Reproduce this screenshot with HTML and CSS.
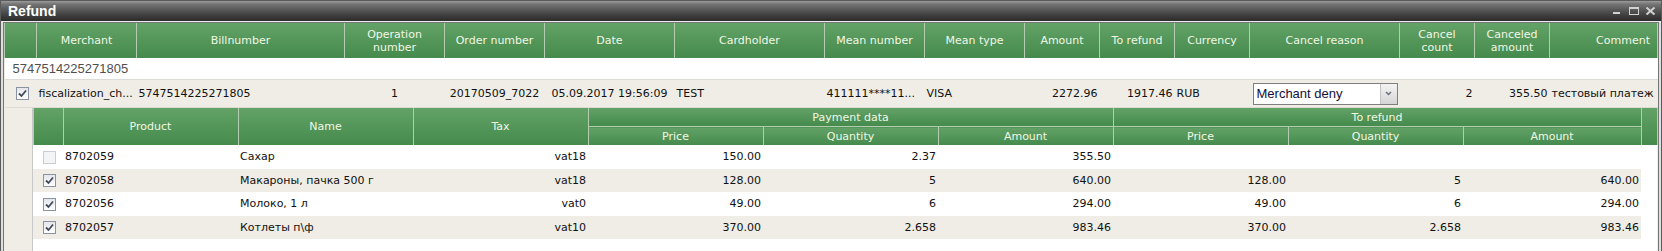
FILE: index.html
```html
<!DOCTYPE html>
<html lang="ru">
<head>
  <meta charset="UTF-8" />
  <title>Refund</title>
  <link rel="stylesheet" href="styles.css">
</head>
<body>
  <div class="window">
    <div class="titlebar">
      <span class="title">Refund</span>
      <svg class="controls" width="43" height="8" viewBox="0 0 43 8">
        <rect x="0" y="5" width="7" height="2" />
        <rect x="16" y="0" width="10" height="2" />
        <rect x="16.5" y="0.5" width="9" height="7" class="outline" />
        <path d="M33.5 0.5l8 7M41.5 0.5l-8 7" class="cross" />
      </svg>
    </div>

    <div class="content">
      <table class="grid main">
        <colgroup>
          <col style="width:32px"><col style="width:100px"><col style="width:208px">
          <col style="width:100px"><col style="width:100px"><col style="width:130px">
          <col style="width:150px"><col style="width:100px"><col style="width:100px">
          <col style="width:75px"><col style="width:75px"><col style="width:75px">
          <col style="width:150px"><col style="width:75px"><col style="width:75px"><col>
        </colgroup>
        <thead>
          <tr>
            <th></th>
            <th>Merchant</th>
            <th>Billnumber</th>
            <th>Operation<br>number</th>
            <th>Order number</th>
            <th>Date</th>
            <th>Cardholder</th>
            <th>Mean number</th>
            <th>Mean type</th>
            <th>Amount</th>
            <th>To refund</th>
            <th>Currency</th>
            <th>Cancel reason</th>
            <th>Cancel<br>count</th>
            <th>Canceled<br>amount</th>
            <th class="right">Comment</th>
          </tr>
        </thead>
        <tbody>
          <tr class="group-row">
            <td colspan="16">5747514225271805</td>
          </tr>
          <tr class="bill-row">
            <td class="check"><span class="cb"><svg viewBox="0 0 11 11"><path d="M2 5.5l2.5 2.5 4.5-5.5" /></svg></span></td>
            <td>fiscalization_ch...</td>
            <td>5747514225271805</td>
            <td class="center">1</td>
            <td class="center">20170509_7022</td>
            <td class="center">05.09.2017 19:56:09</td>
            <td>TEST</td>
            <td>411111****11...</td>
            <td>VISA</td>
            <td class="right">2272.96</td>
            <td class="right">1917.46</td>
            <td>RUB</td>
            <td>
              <span class="select">
                <span class="select-value">Merchant deny</span>
                <span class="select-btn"><svg width="7" height="5" viewBox="0 0 7 5"><path d="M1 1l2.5 2.5L6 1" /></svg></span>
              </span>
            </td>
            <td class="right">2</td>
            <td class="right">355.50</td>
            <td>тестовый платеж</td>
          </tr>
          <tr class="detail-row">
            <td colspan="16">
              <div class="detail">
                <table class="grid sub">
                  <colgroup>
                    <col style="width:30px">
                    <col style="width:175px"><col style="width:175px"><col style="width:175px">
                    <col style="width:175px"><col style="width:175px"><col style="width:175px">
                    <col style="width:175px"><col style="width:175px"><col style="width:178px">
                    <col style="width:16px">
                  </colgroup>
                  <thead>
                    <tr>
                      <th rowspan="2"></th>
                      <th rowspan="2">Product</th>
                      <th rowspan="2">Name</th>
                      <th rowspan="2">Tax</th>
                      <th colspan="3" class="group">Payment data</th>
                      <th colspan="3" class="group">To refund</th>
                      <th rowspan="2"></th>
                    </tr>
                    <tr>
                      <th>Price</th>
                      <th>Quantity</th>
                      <th>Amount</th>
                      <th>Price</th>
                      <th>Quantity</th>
                      <th>Amount</th>
                    </tr>
                  </thead>
                  <tbody>
                    <tr>
                      <td class="check"><span class="cb off"></span></td>
                      <td>8702059</td>
                      <td>Сахар</td>
                      <td class="right">vat18</td>
                      <td class="right">150.00</td>
                      <td class="right">2.37</td>
                      <td class="right">355.50</td>
                      <td></td>
                      <td></td>
                      <td></td>
                      <td class="gap"></td>
                    </tr>
                    <tr>
                      <td class="check"><span class="cb"><svg viewBox="0 0 11 11"><path d="M2 5.5l2.5 2.5 4.5-5.5" /></svg></span></td>
                      <td>8702058</td>
                      <td>Макароны, пачка 500 г</td>
                      <td class="right">vat18</td>
                      <td class="right">128.00</td>
                      <td class="right">5</td>
                      <td class="right">640.00</td>
                      <td class="right">128.00</td>
                      <td class="right">5</td>
                      <td class="right">640.00</td>
                      <td class="gap"></td>
                    </tr>
                    <tr>
                      <td class="check"><span class="cb"><svg viewBox="0 0 11 11"><path d="M2 5.5l2.5 2.5 4.5-5.5" /></svg></span></td>
                      <td>8702056</td>
                      <td>Молоко, 1 л</td>
                      <td class="right">vat0</td>
                      <td class="right">49.00</td>
                      <td class="right">6</td>
                      <td class="right">294.00</td>
                      <td class="right">49.00</td>
                      <td class="right">6</td>
                      <td class="right">294.00</td>
                      <td class="gap"></td>
                    </tr>
                    <tr>
                      <td class="check"><span class="cb"><svg viewBox="0 0 11 11"><path d="M2 5.5l2.5 2.5 4.5-5.5" /></svg></span></td>
                      <td>8702057</td>
                      <td>Котлеты п\ф</td>
                      <td class="right">vat10</td>
                      <td class="right">370.00</td>
                      <td class="right">2.658</td>
                      <td class="right">983.46</td>
                      <td class="right">370.00</td>
                      <td class="right">2.658</td>
                      <td class="right">983.46</td>
                      <td class="gap"></td>
                    </tr>
                  </tbody>
                </table>
              </div>
            </td>
          </tr>
        </tbody>
      </table>
    </div>
  </div>
</body>
</html>
```

FILE: styles.css
```css
html, body {
  margin: 0;
  overflow: hidden;
}

body {
  font-family: "DejaVu Sans", Verdana, sans-serif;
  font-size: 11px;
  color: #111;
  background: #fff;
}

.window {
  border: 1px solid #5b5b5b;
  background: #dedede;
  height: 320px;
}

.titlebar {
  height: 20px;
  display: flex;
  align-items: center;
  justify-content: space-between;
  padding: 0 5px 0 7px;
  border-bottom: 1px solid #ececec;
  background: linear-gradient(#9b9b9b 0, #767676 15%, #575757 45%, #3c3c3c 75%, #2b2b2b 100%);
}

.title {
  font-family: "Liberation Sans", Arial, sans-serif;
  font-size: 14px;
  font-weight: bold;
  color: #fff;
}

.controls {
  fill: #d2d2d2;
}

.controls .outline {
  fill: none;
  stroke: #d2d2d2;
}

.controls .cross {
  fill: none;
  stroke: #d2d2d2;
  stroke-width: 2;
}

.content {
  margin: 0 2px;
  border: 1px solid #767676;
  background: #efede6;
  height: 400px;
}

table.grid {
  border-collapse: collapse;
  table-layout: fixed;
  width: 100%;
}

.grid th {
  padding: 0 2px;
  font-weight: normal;
  line-height: 13px;
  color: #f1f7e6;
  text-align: center;
  background: linear-gradient(#63a267, #458a4c);
  border-left: 1px solid #b3cdb0;
  border-right: 1px solid #b3cdb0;
  white-space: nowrap;
}

.main > thead th {
  height: 35px;
}

.grid th.right {
  text-align: right;
  padding-right: 7px;
}

.grid td {
  padding: 0 2px;
  white-space: nowrap;
  overflow: hidden;
}

.grid td.right {
  text-align: right;
}

.grid td.center {
  text-align: center;
}

.group-row td {
  height: 21px;
  padding: 0 8px;
  background: #fff;
  border-bottom: 1px solid #dcdcd6;
  font-family: "Liberation Sans", Arial, sans-serif;
  font-size: 13px;
  color: #4f4f4f;
}

.bill-row td {
  height: 27px;
  border-bottom: 1px solid #dddbd4;
}

.bill-row td.check {
  padding-left: 11px;
}

.cb {
  display: inline-block;
  width: 11px;
  height: 11px;
  border: 1px solid #8a93a3;
  background: linear-gradient(#e4e6ea, #fff);
  vertical-align: middle;
}

.cb svg {
  display: block;
  width: 11px;
  height: 11px;
}

.cb path {
  fill: none;
  stroke: #3f4b5c;
  stroke-width: 1.8;
}

.cb.off {
  border-color: #c9ced6;
  background: #f3f4f6;
}

.select {
  display: flex;
  width: 143px;
  height: 20px;
  margin-left: 1px;
  border: 1px solid #7f7f7f;
  background: #fff;
}

.select-value {
  flex: 1;
  padding-left: 3px;
  font-family: "Liberation Sans", Arial, sans-serif;
  font-size: 13px;
  line-height: 20px;
  color: #10103a;
}

.select-btn {
  width: 16px;
  display: flex;
  align-items: center;
  justify-content: center;
  border-left: 1px solid #c2c2c2;
  background: linear-gradient(#f3f3f3, #d5d5d5);
}

.select-btn path {
  fill: none;
  stroke: #69707c;
  stroke-width: 1.5;
}

.detail-row > td {
  padding: 0;
  overflow: visible;
}

.detail {
  margin: 0 1px 0 27px;
  border-left: 1px solid #c8c8c8;
  background: #fff;
  height: 200px;
}

.sub thead tr:first-child th {
  height: 18px;
}

.sub thead tr + tr th {
  height: 18px;
  border-top: 1px solid #b3cdb0;
}

.sub th.group {
  border-bottom: 1px solid #b3cdb0;
}

.sub tbody td {
  height: 23.5px;
}

.sub tbody tr:nth-child(even) td {
  background: #efede6;
}

.sub tbody td.check {
  padding-left: 10px;
}

.sub tbody td.gap {
  background: #fff !important;
}
```
